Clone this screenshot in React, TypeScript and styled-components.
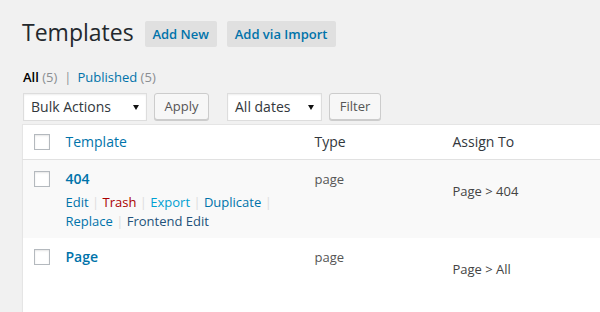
import React from "react";
import styled, { createGlobalStyle } from "styled-components";

const Global = createGlobalStyle`
  * { box-sizing: border-box; }
  html, body { margin: 0; padding: 0; overflow: hidden; }
  body {
    background: #f1f1f1;
    font-family: "Open Sans", "Liberation Sans", sans-serif;
    font-size: 13px;
    color: #444;
  }
`;

const Wrap = styled.div`
  padding: 18px 0 0 22px;
  width: 600px;
  height: 312px;
  overflow: hidden;
`;

const Heading = styled.div`
  display: flex;
  align-items: flex-start;
`;

const Title = styled.h1`
  margin: 0;
  font-size: 23px;
  font-weight: 400;
  line-height: 29px;
  color: #23282d;
`;

const TitleAction = styled.a<{ $w: number; $ml: number }>`
  display: flex;
  align-items: center;
  justify-content: center;
  width: ${(p) => p.$w}px;
  height: 26px;
  margin: 3px 0 0 ${(p) => p.$ml}px;
  background: #e0e0e0;
  border-radius: 2px;
  color: #0073aa;
  font-size: 13px;
  font-weight: 600;
  text-decoration: none;
  white-space: nowrap;
`;

const SubSub = styled.ul`
  display: flex;
  margin: 21px 0 0;
  padding: 0 0 0 1px;
  list-style: none;
  font-size: 13px;
  line-height: 18px;
  color: #666;
`;

const SubItem = styled.li`
  display: flex;
  white-space: pre;
`;

const SubLink = styled.a<{ $current?: boolean }>`
  color: ${(p) => (p.$current ? "#000" : "#0073aa")};
  font-weight: ${(p) => (p.$current ? 600 : 400)};
  text-decoration: none;
`;

const Count = styled.span`
  color: #8a8e92;
  font-weight: 400;
`;

const Pipe = styled.span`
  color: #8f9397;
  margin: 0 6px 0 7px;
`;

const TableNav = styled.div`
  display: flex;
  align-items: flex-start;
  margin-top: 7px;
  padding-left: 1px;
  height: 28px;
`;

const SelectBox = styled.div<{ $w: number; $ml?: number }>`
  display: flex;
  align-items: center;
  justify-content: space-between;
  width: ${(p) => p.$w}px;
  height: 28px;
  margin-left: ${(p) => p.$ml ?? 0}px;
  padding: 0 7px 0 7px;
  background: #fff;
  border: 1px solid #ddd;
  box-shadow: inset 0 1px 2px rgba(0, 0, 0, 0.07);
  color: #32373c;
  font-size: 14px;
  line-height: 26px;
`;

const Arrow = styled.svg`
  width: 6px;
  height: 5px;
  flex: none;
  margin-top: 1px;
`;

const Button = styled.button<{ $w: number; $ml: number }>`
  width: ${(p) => p.$w}px;
  height: 27px;
  margin: 0 0 0 ${(p) => p.$ml}px;
  padding: 0;
  background: #f7f7f7;
  border: 1px solid #ccc;
  border-radius: 3px;
  box-shadow: 0 1px 0 #ccc;
  color: #555;
  font-family: "Open Sans", "Liberation Sans", sans-serif;
  font-size: 13px;
  line-height: 25px;
`;

const Table = styled.table`
  margin-top: 3px;
  width: 640px;
  table-layout: fixed;
  border-collapse: collapse;
  border-spacing: 0;
  background: #fff;
  border: 1px solid #e5e5e5;
  box-shadow: 0 1px 1px rgba(0, 0, 0, 0.04);
`;

const Col = styled.col<{ $w?: number }>`
  width: ${(p) => (p.$w ? `${p.$w}px` : "auto")};
`;

const HeadRow = styled.tr`
  border-bottom: 1px solid #e1e1e1;
`;

const Th = styled.th<{ $link?: boolean }>`
  padding: 7px 10px;
  text-align: left;
  vertical-align: top;
  font-size: 14px;
  font-weight: 400;
  line-height: 20px;
  color: ${(p) => (p.$link ? "#0073aa" : "#32373c")};
`;

const CheckCell = styled.td<{ $head?: boolean }>`
  padding: ${(p) => (p.$head ? "9px 0 0 11px" : "11px 0 0 11px")};
  vertical-align: top;
`;

const Check = styled.input.attrs({ type: "checkbox" })`
  appearance: none;
  display: block;
  margin: 0;
  width: 16px;
  height: 16px;
  background: #fff;
  border: 1px solid #b4b9be;
  box-shadow: inset 0 1px 2px rgba(0, 0, 0, 0.1);
`;

const Row = styled.tr<{ $alt?: boolean }>`
  background: ${(p) => (p.$alt ? "#f9f9f9" : "#fff")};
`;

const Td = styled.td<{ $pt?: number }>`
  height: 78px;
  padding: ${(p) => p.$pt ?? 9}px 10px 7px;
  vertical-align: top;
  font-size: 13px;
  line-height: 20px;
  color: #555;
`;

const RowTitle = styled.a`
  display: block;
  color: #0073aa;
  font-size: 14px;
  font-weight: 600;
  line-height: 20px;
  text-decoration: none;
`;

const Actions = styled.div`
  margin-top: 4px;
  font-size: 13px;
  line-height: 19px;
  color: #ddd;
`;

const ActionLink = styled.a<{ $c: string }>`
  color: ${(p) => p.$c};
  text-decoration: none;
`;

const Assign = styled.span`
  color: #444;
`;

const DownArrow = () => (
  <Arrow viewBox="0 0 6 5">
    <path d="M0 0H6L3 5Z" fill="#111" />
  </Arrow>
);

const actions: { label: string; color: string }[] = [
  { label: "Edit", color: "#0073aa" },
  { label: "Trash", color: "#a00" },
  { label: "Export", color: "#00a0d2" },
  { label: "Duplicate", color: "#0073aa" },
  { label: "Replace", color: "#0073aa" },
  { label: "Frontend Edit", color: "#23527a" },
];

export default function App() {
  return (
    <>
      <Global />
      <Wrap>
        <Heading>
          <Title>Templates</Title>
          <TitleAction href="#" $w={72} $ml={11}>
            Add New
          </TitleAction>
          <TitleAction href="#" $w={109} $ml={10}>
            Add via Import
          </TitleAction>
        </Heading>

        <SubSub>
          <SubItem>
            <SubLink href="#" $current>
              All <Count>(5)</Count>
            </SubLink>
            <Pipe>|</Pipe>
          </SubItem>
          <SubItem>
            <SubLink href="#">
              Published <Count>(5)</Count>
            </SubLink>
          </SubItem>
        </SubSub>

        <TableNav>
          <SelectBox $w={124}>
            <span>Bulk Actions</span>
            <DownArrow />
          </SelectBox>
          <Button $w={55} $ml={7}>
            Apply
          </Button>
          <SelectBox $w={95} $ml={18}>
            <span>All dates</span>
            <DownArrow />
          </SelectBox>
          <Button $w={52} $ml={7}>
            Filter
          </Button>
        </TableNav>

        <Table>
          <colgroup>
            <Col $w={33} />
            <Col $w={249} />
            <Col $w={138} />
            <Col />
          </colgroup>
          <thead>
            <HeadRow>
              <CheckCell as="th" $head>
                <Check />
              </CheckCell>
              <Th $link>Template</Th>
              <Th>Type</Th>
              <Th>Assign To</Th>
            </HeadRow>
          </thead>
          <tbody>
            <Row $alt>
              <CheckCell>
                <Check />
              </CheckCell>
              <Td>
                <RowTitle href="#">404</RowTitle>
                <Actions>
                  {actions.map((a, i) => (
                    <React.Fragment key={a.label}>
                      <ActionLink href="#" $c={a.color}>
                        {a.label}
                      </ActionLink>
                      {i < actions.length - 1 ? " | " : ""}
                    </React.Fragment>
                  ))}
                </Actions>
              </Td>
              <Td>page</Td>
              <Td $pt={21}>
                <Assign>Page &gt; 404</Assign>
              </Td>
            </Row>
            <Row>
              <CheckCell>
                <Check />
              </CheckCell>
              <Td>
                <RowTitle href="#">Page</RowTitle>
              </Td>
              <Td>page</Td>
              <Td $pt={21}>
                <Assign>Page &gt; All</Assign>
              </Td>
            </Row>
          </tbody>
        </Table>
      </Wrap>
    </>
  );
}
